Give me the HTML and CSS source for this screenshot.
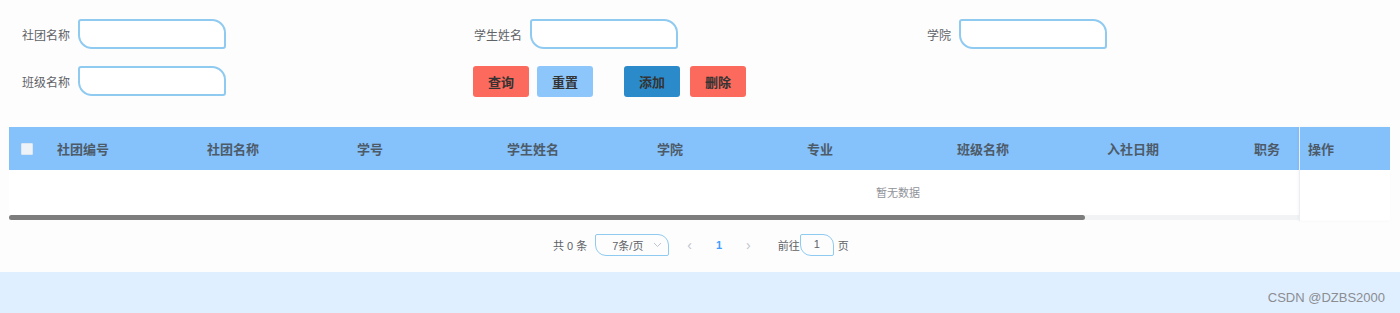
FILE: index.html
```html
<!DOCTYPE html>
<html lang="zh-CN">
<head>
  <meta charset="UTF-8">
  <meta name="viewport" content="width=device-width, initial-scale=1.0">
  <title>社团成员管理</title>
  <link rel="stylesheet" href="styles.css">
</head>
<body>
  <div class="page">
    <div class="search-form">
      <div class="form-item">
        <label>社团名称</label>
        <input type="text" class="field">
      </div>
      <div class="form-item">
        <label>学生姓名</label>
        <input type="text" class="field">
      </div>
      <div class="form-item">
        <label>学院</label>
        <input type="text" class="field">
      </div>
      <div class="form-item">
        <label>班级名称</label>
        <input type="text" class="field">
      </div>
      <div class="btn-group">
        <button class="btn btn-red">查询</button>
        <button class="btn btn-light">重置</button>
        <button class="btn btn-blue btn-gap">添加</button>
        <button class="btn btn-red">删除</button>
      </div>
    </div>

    <div class="table">
      <div class="table-main">
        <div class="table-head">
          <div class="col-check"><span class="checkbox"></span></div>
          <div class="col">社团编号</div>
          <div class="col">社团名称</div>
          <div class="col">学号</div>
          <div class="col">学生姓名</div>
          <div class="col">学院</div>
          <div class="col">专业</div>
          <div class="col">班级名称</div>
          <div class="col">入社日期</div>
          <div class="col col-last">职务</div>
        </div>
        <div class="table-empty">暂无数据</div>
        <div class="scrollbar"><div class="thumb"></div></div>
      </div>
      <div class="table-fixed">
        <div class="fixed-head">操作</div>
        <div class="fixed-body"></div>
      </div>
    </div>

    <div class="pagination">
      <span class="total">共 0 条</span>
      <div class="sizes">7条/页
        <svg class="caret" width="9" height="6" viewBox="0 0 9 6"><path d="M1 1 L4.5 4.5 L8 1" fill="none" stroke="#c0c4cc" stroke-width="1"/></svg>
      </div>
      <span class="arrow">&lsaquo;</span>
      <span class="pager">1</span>
      <span class="arrow arrow-next">&rsaquo;</span>
      <span class="jump">前往</span>
      <div class="jump-input">1</div>
      <span class="jump">页</span>
    </div>
  </div>

  <div class="footer">
    <span class="watermark">CSDN @DZBS2000</span>
  </div>
</body>
</html>
```

FILE: styles.css
```css
body {
  margin: 0;
  padding: 0;
  background-color: #fdfdfe;
  font-family: "Liberation Sans", "Noto Sans CJK SC", sans-serif;
  color: #606266;
}
.page {
  height: 272px;
}
.search-form {
  display: grid;
  grid-template-columns: 452px 453px auto;
  grid-template-rows: 30px 32px;
  row-gap: 16px;
  padding: 19px 0 0 22px;
}
.form-item {
  display: flex;
  align-items: center;
}
label {
  font-size: 12px;
  color: #5f6266;
  margin-right: 8px;
  font-family: "Noto Sans CJK SC", sans-serif;
}
.field {
  width: 148px;
  height: 30px;
  box-sizing: border-box;
  border: 2px solid #8fcaf0;
  border-radius: 3px 14px 3px 14px;
  background: #fff;
  outline: none;
}
.btn-group {
  display: flex;
  align-items: center;
  margin-left: -1px;
}
.btn {
  width: 56px;
  height: 31px;
  border: none;
  border-radius: 3px;
  font-size: 13px;
  font-weight: bold;
  color: #333;
  font-family: "Noto Sans CJK SC", sans-serif;
  margin-right: 8px;
  cursor: pointer;
}
.btn-red {
  background-color: #fb6a5c;
}
.btn-light {
  background-color: #8dc6fb;
}
.btn-blue {
  background-color: #2b8bca;
}
.btn-gap {
  margin-left: 23px;
  margin-right: 10px;
}
.table {
  display: flex;
  margin: 30px 10px 0 9px;
  height: 94px;
  font-family: "Noto Sans CJK SC", sans-serif;
}
.table-main {
  flex: 1;
  overflow: hidden;
}
.table-head {
  display: flex;
  height: 43px;
  align-items: center;
  background-color: #85c1fb;
}
.col-check {
  width: 38px;
  flex: none;
  display: flex;
  justify-content: center;
}
.checkbox {
  width: 10px;
  height: 10px;
  background: #eef3f9;
  border: 1px solid #dbe6f1;
  border-radius: 1px;
  margin-left: -2px;
}
.col {
  width: 150px;
  flex: none;
  box-sizing: border-box;
  padding-left: 10px;
  font-size: 13px;
  font-weight: bold;
  color: #4d5b69;
}
.col-last {
  padding-left: 7px;
}
.table-empty {
  height: 45px;
  line-height: 45px;
  padding-left: 867px;
  font-size: 11px;
  color: #909399;
  background: #fff;
}
.scrollbar {
  height: 5px;
  background: #f2f3f4;
}
.thumb {
  width: 1076px;
  height: 5px;
  border-radius: 3px;
  background: #7d7d7d;
}
.table-fixed {
  width: 90px;
  border-left: 1px solid #e9eef3;
  box-shadow: -1px 0 3px rgba(0, 0, 0, 0.04);
}
.fixed-head {
  height: 43px;
  line-height: 43px;
  padding-left: 8px;
  background-color: #84c0fa;
  font-size: 13px;
  font-weight: bold;
  color: #4d5b69;
}
.fixed-body {
  height: 50px;
  background: #fff;
}
.pagination {
  display: flex;
  align-items: center;
  margin: 13px 0 0 553px;
  height: 22px;
  font-size: 11px;
  color: #606266;
}
.total {
  margin-right: 8px;
}
.sizes {
  width: 74px;
  height: 22px;
  box-sizing: border-box;
  border: 1.5px solid #8fcaf0;
  border-radius: 2px 11px 2px 11px;
  display: flex;
  align-items: center;
  padding-left: 16px;
  position: relative;
}
.caret {
  position: absolute;
  right: 6px;
  top: 7px;
}
.arrow {
  color: #c0c4cc;
  font-size: 14px;
  margin-left: 18px;
}
.pager {
  color: #409eff;
  font-weight: bold;
  margin-left: 24px;
}
.arrow-next {
  margin-left: 24px;
}
.jump {
  margin-left: 27px;
}
.jump-input {
  width: 34px;
  height: 22px;
  box-sizing: border-box;
  border: 1.5px solid #8fcaf0;
  border-radius: 2px 11px 2px 11px;
  text-align: center;
  line-height: 19px;
  margin-left: 0;
}
.jump-input + .jump {
  margin-left: 4px;
}
.footer {
  height: 41px;
  background-color: #e0efff;
  display: flex;
  justify-content: flex-end;
  align-items: center;
  padding-right: 15px;
}
.watermark {
  font-family: "Liberation Sans", sans-serif;
  font-size: 13px;
  color: #8a8d91;
  margin-top: 10px;
}
```
